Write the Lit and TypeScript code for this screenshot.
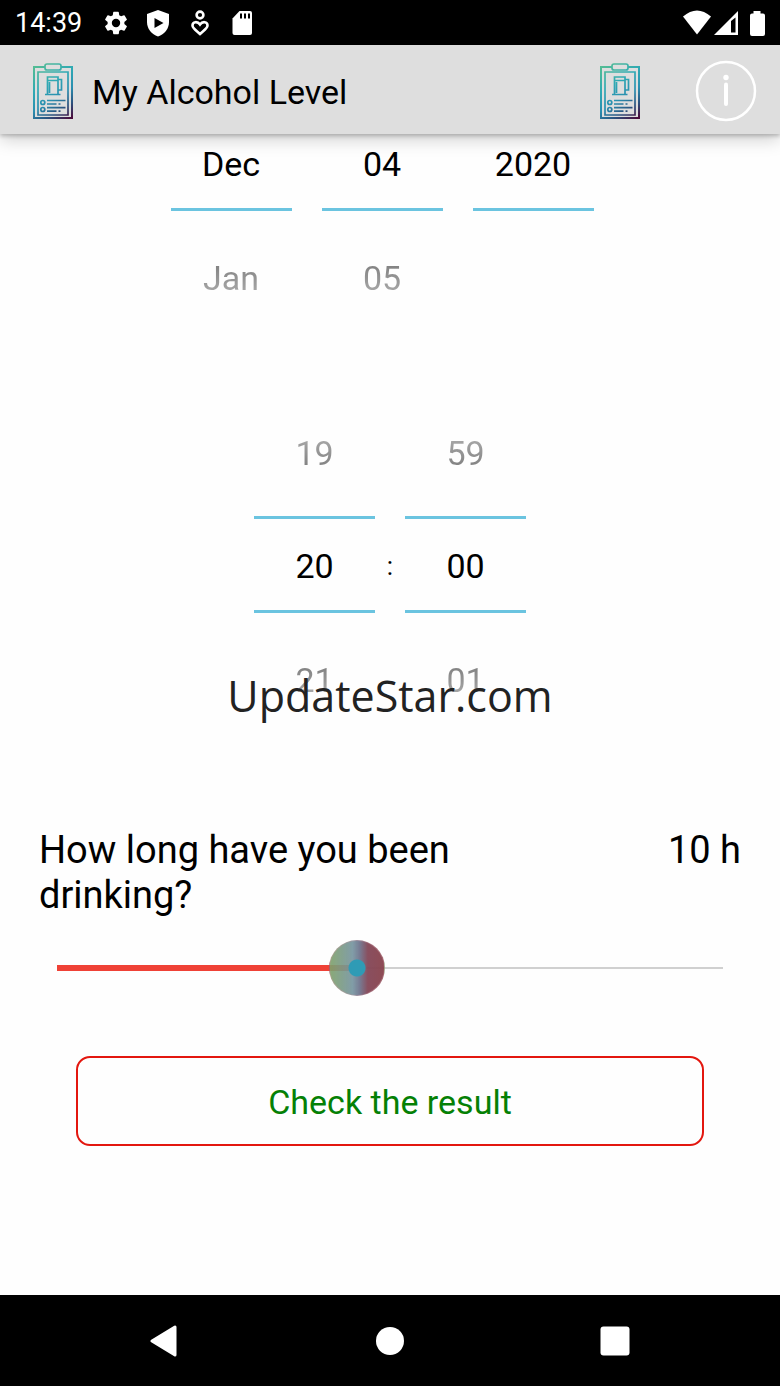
import { LitElement, html, css, svg, nothing } from "lit";
import { customElement, property, state } from "lit/decorators.js";

@customElement("clipboard-icon")
class ClipboardIcon extends LitElement {
  static styles = css`
    :host { display: block; line-height: 0; }
  `;
  render() {
    return html`<svg width="40" height="58" viewBox="0 0 40 58" fill="none" stroke="url(#tint)" stroke-width="1.7" aria-hidden="true">
      <defs>
        <linearGradient id="tint" gradientUnits="userSpaceOnUse" x1="4" y1="2" x2="38" y2="56">
          <stop offset="0" stop-color="#55bd93" />
          <stop offset="0.35" stop-color="#2fa9b4" />
          <stop offset="0.6" stop-color="#2a8fb0" />
          <stop offset="0.8" stop-color="#2b5480" />
          <stop offset="1" stop-color="#4a0c3c" />
        </linearGradient>
      </defs>
      <path d="M12 5H1V56H39V5H28" stroke-width="2" />
      <path d="M5 10H35V53H5Z" />
      <rect x="12" y="2" width="16" height="6" rx="2" />
      <path d="M14.500 32V15H25V32M12 32.500H27.500M14.500 18.500H25M25 17.500H28.500V28H25M16.500 20V31" />
      <circle cx="9.800" cy="40.500" r="2" /><circle cx="9.800" cy="47.500" r="2" />
      <path d="M14 38.500H32.500M14 42H23.500M25.500 42H27.500M14 45.700H32.500M14 49.200H23.500M25.500 49.200H27.500" />
    </svg>`;
  }
}

@customElement("wheel-column")
class WheelColumn extends LitElement {
  @property() label = "";
  @property() value = "";
  @property() prev = "";
  @property() next = "";

  static styles = css`
    :host { display: flex; flex-direction: column; width: 121px; }
    button, input {
      box-sizing: border-box; width: 100%; margin: 0; padding: 3px 0 0; border: 0; border-radius: 0;
      background: none; text-align: center; font: 34px/40px Roboto, sans-serif; outline: 0;
    }
    button { height: 130px; cursor: pointer; }
    input { height: 97px; color: #000; border-top: 3px solid #6bc4e0; border-bottom: 3px solid #6bc4e0; }
    .fade { display: block; color: transparent; background-clip: text; -webkit-background-clip: text; }
    .up { background-image: linear-gradient(#b0b0b0, #787878); }
    .down { background-image: linear-gradient(#787878, #b0b0b0); }
  `;

  render() {
    return html`
      ${this.prev ? html`<button aria-label="Previous ${this.label}"><span class="fade up">${this.prev}</span></button>` : nothing}
      <input aria-label=${this.label} .value=${this.value} />
      ${this.next ? html`<button aria-label="Next ${this.label}"><span class="fade down">${this.next}</span></button>` : nothing}
    `;
  }
}

const gear = svg`<path fill="#fff" d="M19.140 12.940c.040-.300.060-.610.060-.940s-.020-.640-.070-.940l2.030-1.580a.490.490 0 0 0 .120-.610l-1.920-3.320a.488.488 0 0 0-.590-.220l-2.390.960c-.500-.380-1.030-.700-1.620-.940l-.360-2.540a.484.484 0 0 0-.480-.410h-3.840c-.240 0-.430.170-.470.410l-.360 2.540c-.590.240-1.130.570-1.620.940l-2.390-.960a.480.480 0 0 0-.590.220L2.740 8.870c-.120.210-.080.470.120.610l2.030 1.580c-.050.300-.090.630-.090.940s.020.640.070.940l-2.030 1.580a.490.490 0 0 0-.120.610l1.920 3.320c.120.220.370.290.590.220l2.390-.960c.500.380 1.030.700 1.620.940l.360 2.540c.050.240.240.410.480.410h3.840c.240 0 .440-.170.470-.410l.360-2.540c.590-.240 1.130-.560 1.620-.940l2.390.960c.220.080.470 0 .590-.220l1.920-3.320a.490.490 0 0 0-.120-.610l-2.010-1.580zM12 15.600a3.600 3.600 0 1 1 0-7.200 3.600 3.600 0 0 1 0 7.200z"/>`;

@customElement("app-root")
class AppRoot extends LitElement {
  @state() private hours = 10;
  private readonly minHours = 1;
  private readonly maxHours = 21;

  static styles = css`
    :host {
      display: flex; flex-direction: column; position: relative; min-height: 100vh;
      background: #fefefe; color: #000; font-family: Roboto, sans-serif;
    }
    svg { display: block; }
    button { margin: 0; padding: 0; border: 0; background: none; cursor: pointer; }

    .status { display: flex; align-items: center; justify-content: space-between; height: 45px; padding: 0 9px 0 15px; background: #000; color: #fff; }
    .group { display: flex; align-items: center; }
    .clock { margin-right: 20px; font-size: 27px; line-height: 32px; }
    .notices { gap: 14px; }
    .wifi { margin-right: 2px; }
    .signal { margin-right: 4px; }

    .bar {
      display: flex; align-items: center; position: relative; z-index: 1; box-sizing: border-box;
      height: 89px; padding: 2px 23px 0 33px; background: #dedede;
      box-shadow: 0 2px 4px rgba(0, 0, 0, .22), 0 6px 16px rgba(0, 0, 0, .18);
    }
    h1 { flex: 1; margin: 0 0 0 19px; padding-top: 2px; font-size: 34px; line-height: 40px; font-weight: 400; }
    .info { margin-left: 55px; }

    main { flex: 1; overflow: hidden; }
    .date { display: flex; justify-content: center; gap: 30px; margin-top: -20px; padding-right: 16px; }
    .time { display: flex; justify-content: center; align-items: center; margin-top: 45px; }
    .colon { width: 30px; padding-top: 3px; text-align: center; font-size: 26px; line-height: 30px; }

    .question { display: flex; justify-content: space-between; margin-top: 85px; padding: 0 39px; font-size: 38px; line-height: 45px; }
    .question label { max-width: 480px; }
    .slider { padding: 0 29px; margin-top: 22px; }
    .slider input {
      -webkit-appearance: none; appearance: none; display: block; width: 100%; height: 56px; margin: 0; outline: 0;
      background:
        linear-gradient(#ef4136, #ef4136) 28px 50% / calc((100% - 56px) * var(--fill)) 6px no-repeat,
        linear-gradient(#d0d0d0, #d0d0d0) 50% 50% / calc(100% - 56px) 2px no-repeat;
    }
    .slider input::-webkit-slider-thumb {
      -webkit-appearance: none; width: 56px; height: 56px; border: 1px solid rgba(200, 150, 160, .4); border-radius: 50%;
      background:
        radial-gradient(circle, #2f9bb5 8px, transparent 9px),
        linear-gradient(90deg, rgba(125, 160, 105, .9), rgba(118, 148, 160, .92) 42%, rgba(110, 115, 140, .94) 55%, rgba(130, 68, 85, .94) 70%, rgba(135, 64, 74, .94));
    }
    .action { padding: 60px 76px; }
    .check {
      display: block; box-sizing: border-box; width: 100%; height: 90px; padding-top: 2px;
      border: 2px solid #e3170f; border-radius: 14px; color: #058005; font: 34px/40px Roboto, sans-serif;
    }

    nav { display: grid; grid-template-columns: repeat(3, 1fr); height: 91px; padding: 0 52px; background: #000; }
    nav button { display: grid; place-items: center; }
    .mark {
      position: absolute; z-index: 2; top: 50%; left: 50%; transform: translate(-50%, -50%); pointer-events: none;
      padding-top: 6px; color: #222; font: 43px/60px "Open Sans", sans-serif; white-space: nowrap;
    }
  `;

  private onSlide(e: Event) {
    this.hours = Number((e.target as HTMLInputElement).value);
  }

  render() {
    const fill = (this.hours - this.minHours) / (this.maxHours - this.minHours);
    return html`
      <div class="status">
        <div class="group">
          <span class="clock">14:39</span>
          <div class="group notices">
            <svg width="28" height="28" viewBox="0 0 24 24">${gear}</svg>
            <svg width="28" height="28" viewBox="0 0 28 28"><path fill="#fff" d="M14 1 25 5V13C25 20 20.500 25 14 27.500 7.500 25 3 20 3 13V5Z" /><path d="M10.500 9V19L19.500 14Z" /></svg>
            <svg width="28" height="28" viewBox="0 0 28 28" fill="none" stroke="#fff" stroke-width="2.600"><circle cx="14" cy="6" r="3.400" /><path d="M14 25C11 22 6.500 19.500 6.500 16.500 6.500 12.500 11.500 12 14 15.500 16.500 12 21.500 12.500 21.500 16.500 21.500 19.500 17 22 14 25Z" /></svg>
            <svg width="28" height="28" viewBox="0 0 28 28"><path fill="#fff" d="M11.500 2H22Q24 2 24 4V24Q24 26 22 26H6.500Q4.500 26 4.500 24V9.500Z" /><path stroke="#000" stroke-width="2" d="M13 4.500V9.500M17 4.500V9.500M21 4.500V9.500" /></svg>
          </div>
        </div>
        <div class="group">
          <svg class="wifi" width="28" height="28" viewBox="0 0 28 28"><path fill="#fff" d="M0 7.500Q14-4.500 28 7.500L14 25.500Z" /></svg>
          <svg class="signal" width="26" height="28" viewBox="0 0 26 28"><path fill="#fff" fill-rule="evenodd" d="M1 26 25 2V26ZM18 12V23.500H22.500V8.500Z" /></svg>
          <svg width="28" height="28" viewBox="0 0 28 28"><path fill="#fff" d="M10.500 2H17.500V4.500H20Q22 4.500 22 6.500V25Q22 27 20 27H9Q7 27 7 25V6.500Q7 4.500 9 4.500H10.500Z" /></svg>
        </div>
      </div>

      <header class="bar">
        <clipboard-icon></clipboard-icon>
        <h1>My Alcohol Level</h1>
        <button aria-label="Results"><clipboard-icon></clipboard-icon></button>
        <button class="info" aria-label="Information">
          <svg width="62" height="62" viewBox="0 0 62 62" fill="none" stroke="#fff"><circle cx="31" cy="31" r="29" stroke-width="2.500" /><path d="M31 24.500V44" stroke-width="4" stroke-linecap="round" /><circle cx="31" cy="17.500" r="2.700" fill="#fff" stroke="none" /></svg>
        </button>
      </header>

      <main>
        <div class="date">
          <wheel-column label="Month" value="Dec" next="Jan"></wheel-column>
          <wheel-column label="Day" value="04" next="05"></wheel-column>
          <wheel-column label="Year" value="2020"></wheel-column>
        </div>
        <div class="time">
          <wheel-column label="Hour" prev="19" value="20" next="21"></wheel-column>
          <span class="colon">:</span>
          <wheel-column label="Minute" prev="59" value="00" next="01"></wheel-column>
        </div>
        <div class="question">
          <label for="duration">How long have you been drinking?</label>
          <output for="duration">${this.hours} h</output>
        </div>
        <div class="slider">
          <input id="duration" type="range" min=${this.minHours} max=${this.maxHours} .value=${String(this.hours)} style="--fill:${fill}" @input=${this.onSlide} />
        </div>
        <div class="action"><button class="check">Check the result</button></div>
      </main>

      <nav aria-label="System">
        <button aria-label="Back"><svg width="32" height="32" viewBox="0 0 32 32"><path fill="#fff" stroke="#fff" stroke-width="3" stroke-linejoin="round" d="M3 16 26 2V30Z" /></svg></button>
        <button aria-label="Home"><svg width="28" height="28" viewBox="0 0 28 28"><circle cx="14" cy="14" r="14" fill="#fff" /></svg></button>
        <button aria-label="Recent apps"><svg width="30" height="30" viewBox="0 0 30 30"><rect x=".500" y=".500" width="29" height="29" rx="3" fill="#fff" /></svg></button>
      </nav>
      <div class="mark">UpdateStar.com</div>
    `;
  }
}
